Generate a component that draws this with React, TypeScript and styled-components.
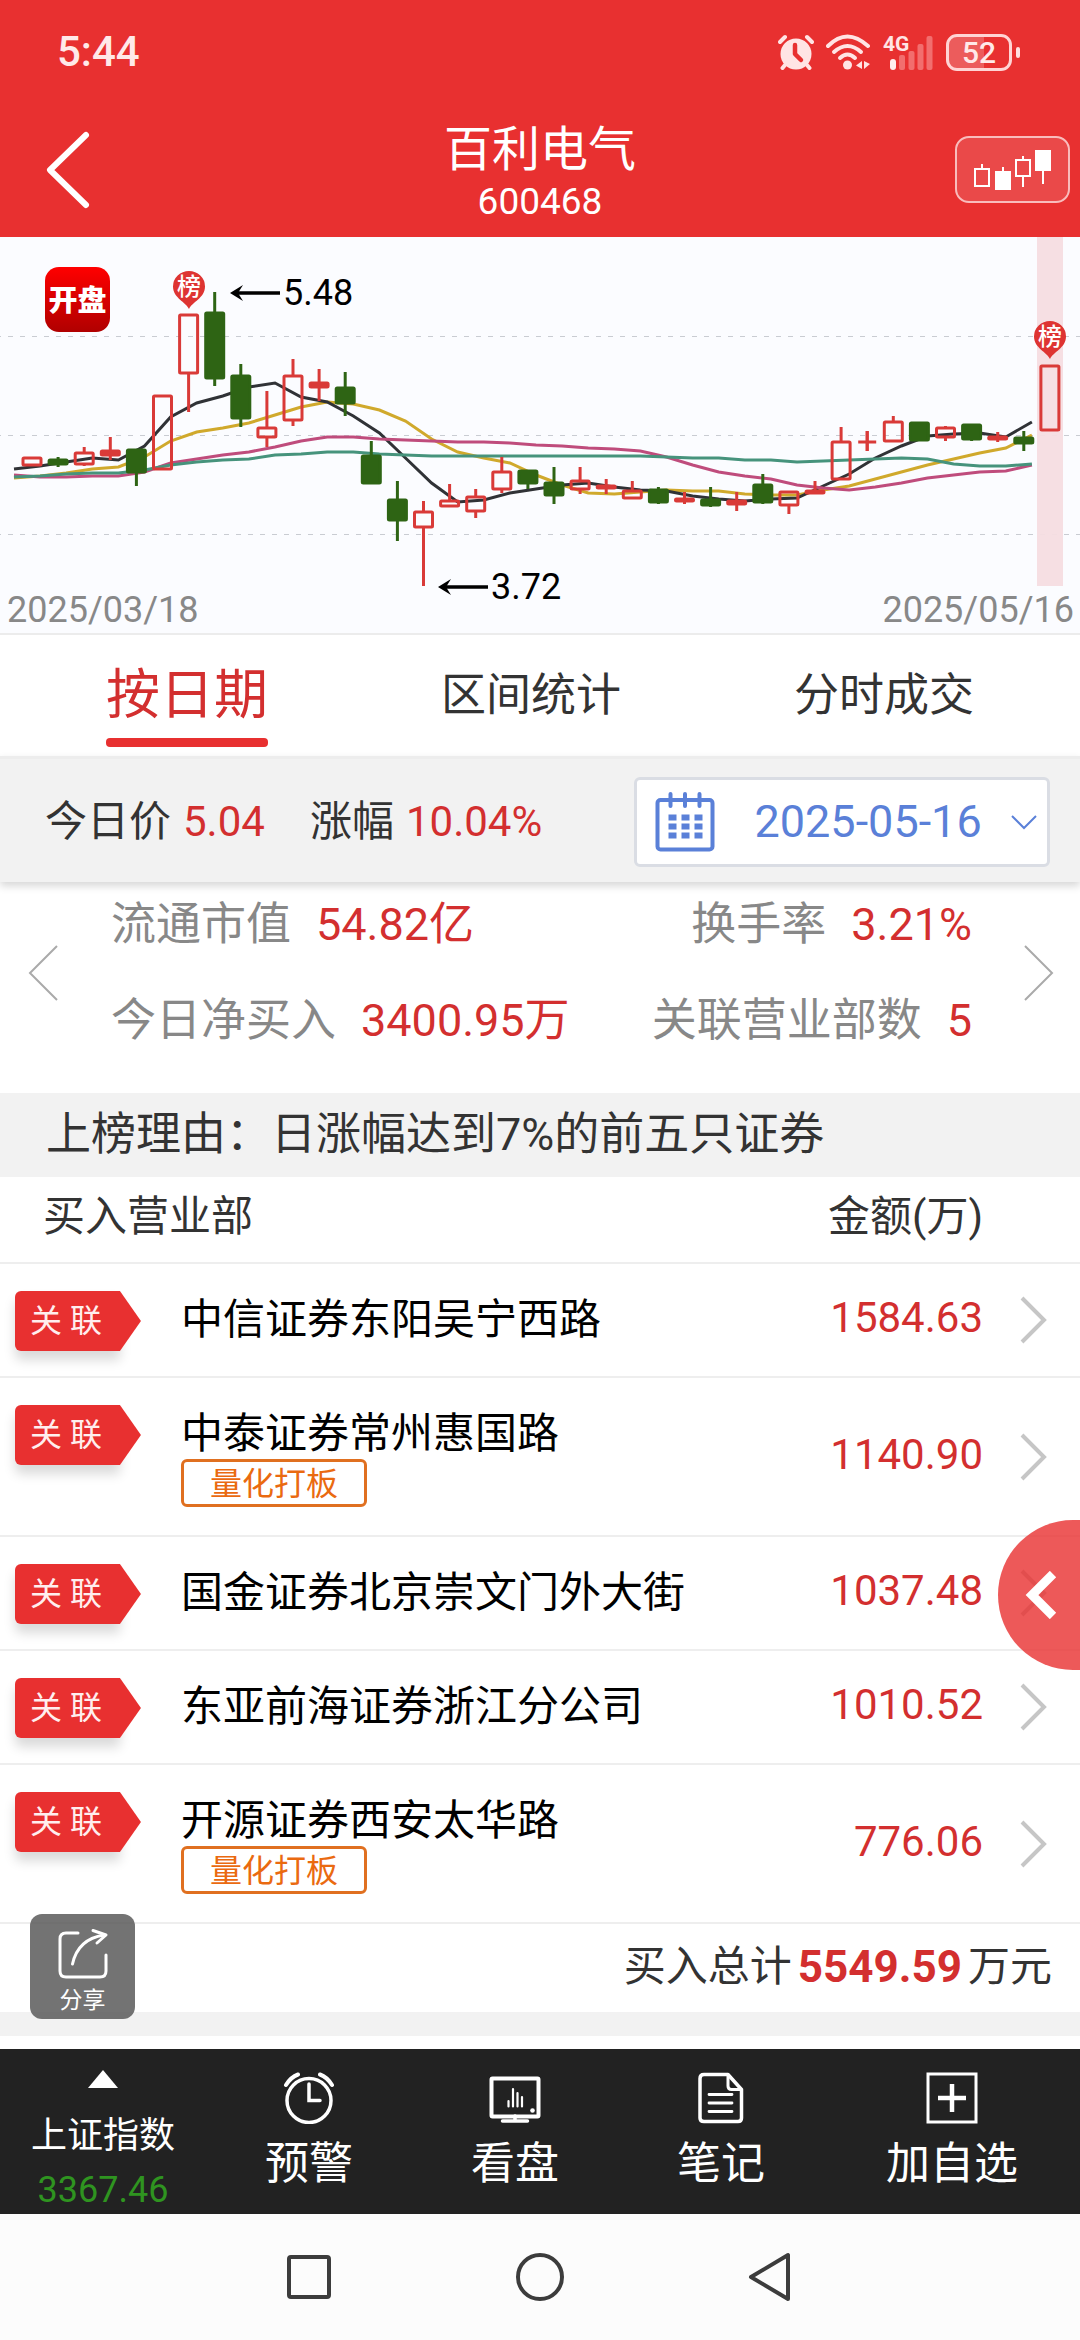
import React from 'react';
import styled, { createGlobalStyle } from 'styled-components';

const colors = {
  brand: '#e83030',
  rise: '#d32f2f',
  fall: '#2e6414',
  ink: '#333333',
  muted: '#888888',
  panel: '#f2f2f2',
  line: '#eeeeee',
  link: '#5a80d8',
  orange: '#e07020',
};

const GlobalStyle = createGlobalStyle`
  *, *::before, *::after { box-sizing: border-box; }
  body {
    margin: 0;
    background: #ffffff;
    color: ${colors.ink};
    font-family: Roboto, "Noto Sans CJK SC", sans-serif;
    font-size: 42px;
  }
  button, select {
    margin: 0;
    padding: 0;
    border: 0;
    background: none;
    color: inherit;
    font: inherit;
  }
  svg { display: block; flex: none; }
`;

const Page = styled.div`
  display: flex;
  flex-direction: column;
  min-height: 100vh;
`;

/* ---------- header ---------- */

const Header = styled.header`
  background: ${colors.brand};
  color: #ffffff;
`;

const StatusBar = styled.div`
  display: flex;
  align-items: center;
  justify-content: space-between;
  height: 102px;
  padding: 2px 60px 0 57px;
  color: #ffe9e9;
  line-height: 48px;
  font-weight: 500;
`;

const StatusIcons = styled.div`
  display: flex;
  align-items: center;
  gap: 12px;
`;

const BatteryGroup = styled.div`
  display: flex;
  align-items: center;
  gap: 4px;
  &::after {
    content: '';
    width: 4px;
    height: 11px;
    border-radius: 2px;
    background: #ffe0e0;
  }
`;

const Battery = styled.div`
  width: 66px;
  height: 37px;
  border: 3px solid #ffd4d4;
  border-radius: 11px;
  background: linear-gradient(90deg, #ec5c5c 58%, ${colors.brand} 58%);
  font-size: 30px;
  line-height: 32px;
  text-align: center;
`;

const TitleBar = styled.div`
  display: grid;
  grid-template-columns: 1fr auto 1fr;
  align-items: center;
  height: 135px;
  padding: 0 10px;
`;

const TitleBlock = styled.div`
  padding-top: 8px;
  text-align: center;
`;

const Title = styled.h1`
  margin: 0;
  font-size: 48px;
  font-weight: 400;
  line-height: 56px;
`;

const Code = styled.div`
  font-size: 37px;
  line-height: 48px;
`;

const IconButton = styled.button`
  display: block;
  justify-self: start;
  cursor: pointer;
`;

const BackButton = styled(IconButton)`
  margin-left: 34px;
`;

const ChartToggle = styled.button`
  display: grid;
  place-items: center;
  justify-self: end;
  width: 115px;
  height: 67px;
  border: 2px solid #f9bcbc;
  border-radius: 14px;
  background: rgba(255, 255, 255, 0.12);
`;

/* ---------- chart ---------- */

const ChartPanel = styled.section`
  border-bottom: 2px solid #ececec;
  background: #fbfcff;
  svg { width: 100%; height: auto; overflow: visible; }
`;

const ChartDates = styled.div`
  display: flex;
  justify-content: space-between;
  padding: 0 6px 0 7px;
  color: ${colors.muted};
  font-size: 36px;
  line-height: 46px;
`;

/* ---------- tabs ---------- */

const Tabs = styled.nav`
  display: flex;
  justify-content: space-between;
  height: 121px;
  padding: 0 106px;
`;

const Tab = styled.button<{ $active?: boolean }>`
  display: flex;
  flex-direction: column;
  align-items: center;
  justify-content: space-between;
  padding: 29px 0 9px;
  color: ${(p) => (p.$active ? colors.rise : colors.ink)};
  font-size: ${(p) => (p.$active ? 54 : 45)}px;
  line-height: 64px;
  &::after {
    content: '';
    align-self: stretch;
    height: 9px;
    border-radius: 4px;
    background: ${(p) => (p.$active ? colors.brand : 'transparent')};
  }
`;

/* ---------- quote bar ---------- */

const QuoteBar = styled.section`
  position: relative;
  display: flex;
  align-items: center;
  justify-content: space-between;
  height: 126px;
  padding: 2px 30px 0 45px;
  border-top: 3px solid #ededed;
  background: ${colors.panel};
  box-shadow: 0 4px 8px rgba(0, 0, 0, 0.16);
`;

const QuoteValues = styled.div`
  display: flex;
  gap: 45px;
  line-height: 56px;
`;

const Quote = styled.div`
  display: flex;
  gap: 12px;
`;

const Red = styled.span`
  color: ${colors.rise};
`;

const DateField = styled.label`
  display: flex;
  align-items: center;
  justify-content: space-between;
  width: 416px;
  height: 90px;
  padding: 0 9px 0 18px;
  border: 3px solid #dadde4;
  border-radius: 6px;
  background: #ffffff;
`;

const DateSelect = styled.select`
  appearance: none;
  padding-left: 12px;
  color: ${colors.link};
  font-size: 45px;
  line-height: 56px;
`;

/* ---------- stats ---------- */

const Stats = styled.section`
  display: flex;
  align-items: center;
  justify-content: space-between;
  padding: 11px 26px 40px 28px;
`;

const StatGrid = styled.dl`
  display: grid;
  flex: 1;
  grid-template-columns: auto auto;
  justify-content: space-between;
  row-gap: 32px;
  margin: 0;
  padding: 0 52px 0 53px;
  font-size: 45px;
  line-height: 64px;
`;

const Stat = styled.div<{ $end?: boolean }>`
  display: flex;
  justify-content: ${(p) => (p.$end ? 'flex-end' : 'flex-start')};
  gap: 25px;
  dt { color: ${colors.muted}; }
  dd { margin: 0; color: ${colors.rise}; }
`;

const Reason = styled.p`
  margin: 0;
  padding: 10px 46px;
  background: ${colors.panel};
  font-size: 45px;
  line-height: 64px;
`;

/* ---------- table ---------- */

const ListSection = styled.section`
  position: relative;
`;

const Table = styled.table`
  width: 100%;
  border-spacing: 0;
  table-layout: fixed;
`;

const HeadCell = styled.th<{ $end?: boolean }>`
  height: 87px;
  padding: 0 0 6px ${(p) => (p.$end ? 0 : 43)}px;
  border-bottom: 2px solid ${colors.line};
  font-weight: 400;
  line-height: 54px;
  text-align: ${(p) => (p.$end ? 'right' : 'left')};
`;

const Cell = styled.td`
  padding: 27px 0 25px;
  border-bottom: 2px solid ${colors.line};
  line-height: 54px;
  vertical-align: top;
`;

const TagCell = styled(Cell)`
  padding-left: 15px;
`;

const AmountCell = styled(Cell)`
  padding: 24px 0 28px;
  color: ${colors.rise};
  text-align: right;
  vertical-align: middle;
`;

const ArrowCell = styled(Cell)`
  padding: 26px 0 26px 37px;
  vertical-align: middle;
`;

const Tag = styled.span`
  display: flex;
  width: 105px;
  height: 60px;
  padding-left: 15px;
  border-radius: 6px 0 0 6px;
  background: ${colors.brand};
  box-shadow: 0 9px 12px rgba(0, 0, 0, 0.15);
  color: #ffeeee;
  font-size: 32px;
  line-height: 60px;
  white-space: nowrap;
  &::after {
    content: '';
    flex: none;
    width: 21px;
    height: 60px;
    margin-left: 18px;
    background: ${colors.brand};
    clip-path: polygon(0 0, 100% 50%, 0 100%);
  }
`;

const Branch = styled.div`
  padding-top: 4px;
  color: #000000;
  line-height: 50px;
  white-space: nowrap;
`;

const Label = styled.span`
  display: block;
  width: fit-content;
  height: 48px;
  margin-bottom: 3px;
  padding: 0 26px;
  border: 3px solid ${colors.orange};
  border-radius: 6px;
  color: #ea6a10;
  font-size: 32px;
  line-height: 44px;
`;

const Drawer = styled.button`
  position: absolute;
  top: 343px;
  right: 0;
  display: grid;
  place-items: center;
  width: 82px;
  height: 150px;
  padding-left: 6px;
  border-radius: 75px 0 0 75px;
  background: rgba(232, 48, 48, 0.8);
`;

const Total = styled.div`
  position: relative;
  display: flex;
  align-items: center;
  justify-content: flex-end;
  gap: 6px;
  height: 88px;
  padding: 0 28px 2px;
  line-height: 56px;
`;

const TotalValue = styled.strong`
  color: ${colors.rise};
  font-size: 44px;
  font-weight: 700;
`;

const Share = styled.button`
  position: absolute;
  left: 30px;
  bottom: -7px;
  display: flex;
  flex-direction: column;
  align-items: center;
  gap: 5px;
  width: 105px;
  height: 105px;
  padding-top: 14px;
  border-radius: 12px;
  background: rgba(80, 80, 80, 0.8);
  color: #ffffff;
  font-size: 23px;
  line-height: 32px;
`;

const Divider = styled.div`
  height: 24px;
  background: ${colors.panel};
`;

/* ---------- bottom bars ---------- */

const Toolbar = styled.nav`
  display: grid;
  grid-template-columns: repeat(4, 206fr) 256fr;
  height: 165px;
  margin-top: auto;
  background: #222222;
  color: #ffffff;
`;

const ToolButton = styled.button`
  display: flex;
  flex-direction: column;
  align-items: center;
  gap: 10px;
  padding-top: 23px;
  font-size: 44px;
  line-height: 60px;
`;

const IndexButton = styled(ToolButton)`
  gap: 0;
  padding-top: 21px;
  font-size: 36px;
  line-height: 54px;
  svg { margin-bottom: 21px; }
`;

const IndexValue = styled.span`
  color: #2f9420;
`;

const SystemNav = styled.nav`
  display: flex;
  justify-content: center;
  height: 126px;
  background: #fcfcfc;
`;

const SystemButton = styled.button`
  display: grid;
  place-items: center;
  width: 231px;
`;

/* ---------- chart data ---------- */

type Candle = { up: boolean; top: number; bottom: number; high: number; low: number };

const c = (up: 0 | 1, top: number, bottom: number, high = top, low = bottom): Candle => ({
  up: up === 1, top, bottom, high, low,
});

const candles: Candle[] = [
  c(1, 221, 228, 220, 229), c(0, 223, 227, 220, 230), c(1, 216, 227, 210, 229), c(1, 214, 218, 200, 223),
  c(0, 213, 235, 213, 249), c(1, 159, 232), c(1, 78, 136, 78, 175), c(0, 76, 141, 55, 149),
  c(0, 139, 181, 127, 190), c(1, 191, 200, 154, 210), c(1, 139, 183, 122, 189), c(1, 146, 150, 132, 164),
  c(0, 151, 166, 135, 179), c(0, 219, 246, 204, 246), c(0, 263, 283, 244, 304), c(1, 275, 290, 264, 349),
  c(1, 264, 269, 247, 269), c(1, 260, 274, 252, 281), c(1, 235, 252, 220, 256), c(0, 234, 246, 234, 252),
  c(0, 246, 258, 230, 267), c(1, 244, 252, 230, 257), c(1, 249, 251, 242, 257), c(1, 254, 261, 244, 261),
  c(0, 253, 265, 250, 267), c(1, 262, 264, 255, 267), c(0, 263, 268, 250, 270), c(1, 264, 267, 255, 274),
  c(0, 248, 265, 237, 267), c(1, 255, 268, 255, 277), c(1, 254, 256, 244, 256), c(1, 205, 242, 190, 242),
  c(1, 205, 205, 194, 214), c(1, 185, 204, 179, 205), c(0, 186, 203, 186, 204), c(1, 191, 200, 189, 204),
  c(0, 188, 202, 188, 204), c(1, 200, 202, 195, 205), c(0, 201, 206, 194, 214), c(1, 129, 193),
];

const averages = [
  {
    color: '#d0a92c',
    values: [241, 239, 236, 232, 230, 220, 204, 195, 191, 186, 178, 170, 165, 167, 173, 184, 202, 215, 221, 226, 238,
      248, 256, 257, 255, 253, 254, 254, 257, 258, 258, 253, 249, 242, 235, 228, 222, 216, 211, 198],
  },
  {
    color: '#303236',
    values: [232, 229, 225, 221, 223, 209, 180, 166, 159, 150, 146, 160, 165, 179, 196, 221, 246, 265, 263, 256, 252,
      248, 246, 250, 253, 254, 259, 262, 264, 262, 261, 249, 237, 221, 209, 199, 197, 196, 200, 185],
  },
  {
    color: '#bf4c7c',
    values: [238, 240, 240, 239, 239, 235, 226, 222, 218, 215, 210, 204, 200, 200, 202, 203, 204, 205, 205, 206, 208,
      209, 211, 212, 214, 220, 228, 235, 239, 242, 248, 251, 253, 250, 246, 241, 238, 235, 234, 228],
  },
  {
    color: '#46937c',
    values: [240, 239, 237, 236, 236, 233, 228, 225, 223, 222, 218, 217, 215, 215, 217, 218, 219, 219, 219, 219, 219,
      219, 219, 219, 219, 220, 221, 221, 223, 223, 225, 224, 223, 222, 221, 222, 227, 229, 229, 227],
  },
];

const STEP = 26.1;
const linePoints = (values: number[]) => values.map((v, i) => `${(14 + STEP * i).toFixed(1)},${v}`).join(' ');

function CandleMark({ candle, x }: { candle: Candle; x: number }) {
  const { up, top, bottom, high, low } = candle;
  const color = up ? '#d93a38' : colors.fall;
  const height = bottom - top;
  return (
    <g stroke={color} strokeWidth="3">
      <line x1={x} x2={x} y1={high} y2={up ? top : low} />
      {up && <line x1={x} x2={x} y1={bottom} y2={low} />}
      {height === 0 ? (
        <g>
          <line x1={x - 9} x2={x + 9} y1={top} y2={top} />
          <line x1={x} x2={x} y1={high} y2={low} />
        </g>
      ) : (
        <rect
          x={x - 9}
          y={top}
          width="18"
          height={height}
          rx="1"
          fill={up ? (height < 5 ? color : 'none') : color}
        />
      )}
    </g>
  );
}

function Pin({ x, y }: { x: number; y: number }) {
  return (
    <g>
      <path
        d={`M${x} ${y + 38} C${x - 3} ${y + 31} ${x - 16} ${y + 27} ${x - 16} ${y + 15.5} A16 15.5 0 0 1 ${x + 16} ${y + 15.5} C${x + 16} ${y + 27} ${x + 3} ${y + 31} ${x} ${y + 38}Z`}
        fill="#de3432"
      />
      <text x={x} y={y + 24} textAnchor="middle" fontSize="24" fontWeight="500" fill="#ffffff">榜</text>
    </g>
  );
}

function Callout({ x, y, label }: { x: number; y: number; label: string }) {
  return (
    <g>
      <path d={`M${x + 4} ${y}H${x + 50}`} stroke="#000" strokeWidth="3.4" />
      <path d={`M${x} ${y}L${x + 13} ${y - 8}L${x + 8} ${y}L${x + 13} ${y + 8}Z`} fill="#000" />
      <text x={x + 53} y={y + 12} fontSize="36" fill="#000">{label}</text>
    </g>
  );
}

function PriceChart() {
  return (
    <svg viewBox="0 0 1080 350" role="img" aria-label="K线图">
      <defs>
        <linearGradient id="logo" x1="0" y1="0" x2="0" y2="1">
          <stop offset="0" stopColor="#ff0000" />
          <stop offset="1" stopColor="#b00000" />
        </linearGradient>
      </defs>
      {[99, 198, 297].map((y) => (
        <line key={y} x1="-4" x2="1080" y1={y + 0.5} y2={y + 0.5} stroke="#c9ccd2" strokeWidth="1" strokeDasharray="5 7" />
      ))}
      <rect x="1037" y="0" width="26" height="349" fill="#f6dde2" fillOpacity="0.95" />
      {averages.map((line) => (
        <polyline key={line.color} points={linePoints(line.values)} fill="none" stroke={line.color} strokeWidth="3" />
      ))}
      {candles.map((candle, i) => (
        <CandleMark key={i} candle={candle} x={32 + STEP * i} />
      ))}
      <rect x="45" y="30" width="65" height="65" rx="14" fill="url(#logo)" />
      <text x="77.5" y="74" textAnchor="middle" fontSize="29" fontWeight="900" fill="#ffffff">开盘</text>
      <Pin x={189} y={34} />
      <Pin x={1050} y={84} />
      <Callout x={230} y={56} label="5.48" />
      <Callout x={438} y={350} label="3.72" />
    </svg>
  );
}

/* ---------- icons ---------- */

const AlarmStatus = () => (
  <svg width="36" height="36" viewBox="0 0 36 36">
    <g stroke="#ffe4e4" strokeLinecap="round" fill="none">
      <path d="M2 8L7 3M34 8L29 3" strokeWidth="4" />
      <path d="M7 31L4.5 34M29 31L31.5 34" strokeWidth="4" />
    </g>
    <circle cx="18" cy="20" r="15.5" fill="#ffe4e4" />
    <path d="M17 11V20L23 26" fill="none" stroke={colors.brand} strokeWidth="4.5" strokeLinecap="round" strokeLinejoin="round" />
  </svg>
);

const WifiStatus = () => (
  <svg width="44" height="36" viewBox="0 0 44 36">
    <g fill="none" stroke="#ffe4e4" strokeWidth="4" strokeLinecap="round">
      <path d="M2 12Q21 -7 42 12" />
      <path d="M8 18Q21.5 6 35 18" />
      <path d="M14 24Q21.5 17 29 24" />
    </g>
    <circle cx="21.5" cy="31" r="4.5" fill="#ffe4e4" />
    <path d="M36 27V35L30 31.500ZM38 27L44 30L38 35Z" fill="#ffe4e4" />
  </svg>
);

const SignalStatus = () => (
  <svg width="52" height="44" viewBox="-1 -4 52 44">
    <text x="0" y="17" fontSize="21" fontWeight="700" fill="#ffe4e4">4G</text>
    <rect x="7" y="25" width="6" height="11" rx="3" fill="#fff0f0" />
    {[[16, 21], [25.5, 17], [34.5, 10], [43.5, 2]].map(([x, y]) => (
      <rect key={x} x={x} y={y} width="6" height={36 - y} rx="2" fill="#f26e6e" />
    ))}
  </svg>
);

const CandlesIcon = () => (
  <svg width="80" height="42" viewBox="0 0 80 42">
    <g fill="none" stroke="#ffffff" strokeWidth="2">
      <rect x="2" y="20" width="14" height="17" />
      <path d="M9 15V20M30 18V23M50 7V10M50 28V38M70 20V35" />
      <rect x="43" y="11" width="14" height="16" />
    </g>
    <rect x="22" y="22" width="16" height="19" fill="#fff" />
    <rect x="62" y="1" width="16" height="21" fill="#fff" />
  </svg>
);

const CalendarIcon = () => (
  <svg width="60" height="60" viewBox="0 0 60 60">
    <rect x="2.5" y="8" width="55" height="49.5" rx="3" fill="none" stroke={colors.link} strokeWidth="4" />
    <path d="M15.5 2V14M30 2V14M44.5 2V14" stroke={colors.link} strokeWidth="4" strokeLinecap="round" />
    {[0, 1, 2].map((row) => [0, 1, 2].map((col) => (
      <rect key={`${row}${col}`} x={13.5 + col * 13} y={22.5 + row * 9} width="8" height="6" fill={colors.link} />
    )))}
  </svg>
);

type ChevronProps = { points: string; width: number; height: number; color: string; stroke: number; round?: boolean };

const Chevron = ({ points, width, height, color, stroke, round }: ChevronProps) => (
  <svg width={width} height={height} viewBox={`0 0 ${width} ${height}`}>
    <polyline
      points={points}
      fill="none"
      stroke={color}
      strokeWidth={stroke}
      strokeLinecap={round ? 'round' : 'butt'}
      strokeLinejoin={round ? 'round' : 'miter'}
    />
  </svg>
);

const ShareIcon = () => (
  <svg width="52" height="52" viewBox="0 0 52 52" fill="none" stroke="#ffffff" strokeWidth="3" strokeLinecap="round" strokeLinejoin="round">
    <path d="M21 5H9Q3 5 3 11V43Q3 49 9 49H43Q49 49 49 43V27" />
    <path d="M15.5 36Q21 11 47 7" />
    <path d="M36 2.5L49 7L40 15" />
  </svg>
);

const AlarmIcon = () => (
  <svg width="52" height="52" viewBox="0 0 52 52" fill="none" stroke="#ffffff" strokeWidth="3.5" strokeLinecap="round">
    <circle cx="26" cy="28.5" r="22" />
    <path d="M26 12V28.5H37" />
    <path d="M3 13Q8 5 15 2.500M49 13Q44 5 37 2.500" strokeWidth="4" />
  </svg>
);

const MonitorIcon = () => (
  <svg width="52" height="52" viewBox="0 0 52 52" fill="none" stroke="#ffffff" strokeLinecap="round">
    <rect x="2.5" y="6.5" width="47" height="38" rx="1" strokeWidth="4" />
    <path d="M26 44V48M13.5 49H38.5" strokeWidth="3.5" />
    <path d="M19.5 29V34.500M24 17V34.500M28.5 21V34.500M33 25V34.500" strokeWidth="2.2" />
    <circle cx="43.5" cy="38.5" r="2.3" fill="#ffffff" stroke="none" />
  </svg>
);

const NoteIcon = () => (
  <svg width="52" height="52" viewBox="0 0 52 52" fill="none" stroke="#ffffff" strokeWidth="3.5" strokeLinejoin="round" strokeLinecap="round">
    <path d="M9 2.5H33L46.5 17.5V46Q46.5 49.5 43 49.5H9Q5 49.5 5 46V6.5Q5 2.5 9 2.5Z" />
    <path d="M33 3V14Q33 17.5 36.5 17.5H46" strokeWidth="3" />
    <path d="M14 22.5H37M14 31H37M14 39.5H37" strokeWidth="2.8" />
  </svg>
);

const AddIcon = () => (
  <svg width="52" height="52" viewBox="0 0 52 52" fill="none" stroke="#ffffff">
    <rect x="2" y="2" width="48" height="48" strokeWidth="3" />
    <path d="M26 12V40M12 26H40" strokeWidth="4.5" />
  </svg>
);

/* ---------- data ---------- */

const branches = [
  { name: '中信证券东阳吴宁西路', amount: '1584.63' },
  { name: '中泰证券常州惠国路', amount: '1140.90', label: '量化打板' },
  { name: '国金证券北京崇文门外大街', amount: '1037.48' },
  { name: '东亚前海证券浙江分公司', amount: '1010.52' },
  { name: '开源证券西安太华路', amount: '776.06', label: '量化打板' },
];

const tools = [
  { text: '预警', Icon: AlarmIcon },
  { text: '看盘', Icon: MonitorIcon },
  { text: '笔记', Icon: NoteIcon },
  { text: '加自选', Icon: AddIcon },
];

const TagCol = styled.col`
  width: 181px;
`;

const AmountCol = styled.col`
  width: 190px;
`;

const ArrowCol = styled.col`
  width: 97px;
`;

export default function App() {
  return (
    <Page>
      <GlobalStyle />
      <Header>
        <StatusBar>
          <span>5:44</span>
          <StatusIcons>
            <AlarmStatus />
            <WifiStatus />
            <SignalStatus />
            <BatteryGroup><Battery>52</Battery></BatteryGroup>
          </StatusIcons>
        </StatusBar>
        <TitleBar>
          <BackButton aria-label="返回">
            <Chevron points="42,5 6,40 42,75" width={48} height={80} color="#ffffff" stroke={6} round />
          </BackButton>
          <TitleBlock>
            <Title>百利电气</Title>
            <Code>600468</Code>
          </TitleBlock>
          <ChartToggle aria-label="K线"><CandlesIcon /></ChartToggle>
        </TitleBar>
      </Header>

      <ChartPanel>
        <PriceChart />
        <ChartDates>
          <span>2025/03/18</span>
          <span>2025/05/16</span>
        </ChartDates>
      </ChartPanel>

      <Tabs>
        <Tab $active>按日期</Tab>
        <Tab>区间统计</Tab>
        <Tab>分时成交</Tab>
      </Tabs>

      <QuoteBar>
        <QuoteValues>
          <Quote>今日价<Red>5.04</Red></Quote>
          <Quote>涨幅<Red>10.04%</Red></Quote>
        </QuoteValues>
        <DateField>
          <CalendarIcon />
          <DateSelect aria-label="日期" defaultValue="2025-05-16">
            <option>2025-05-16</option>
          </DateSelect>
          <Chevron points="2,2 14,14 26,2" width={28} height={16} color={colors.link} stroke={2} />
        </DateField>
      </QuoteBar>

      <Stats>
        <IconButton aria-label="上一日">
          <Chevron points="29,2 2,29 29,56" width={30} height={58} color="#aaaaaa" stroke={2} />
        </IconButton>
        <StatGrid>
          <Stat><dt>流通市值</dt><dd>54.82亿</dd></Stat>
          <Stat $end><dt>换手率</dt><dd>3.21%</dd></Stat>
          <Stat><dt>今日净买入</dt><dd>3400.95万</dd></Stat>
          <Stat $end><dt>关联营业部数</dt><dd>5</dd></Stat>
        </StatGrid>
        <IconButton aria-label="下一日">
          <Chevron points="1,2 28,29 1,56" width={30} height={58} color="#aaaaaa" stroke={2} />
        </IconButton>
      </Stats>

      <Reason>上榜理由：日涨幅达到7%的前五只证券</Reason>

      <ListSection>
        <Table>
          <colgroup>
            <TagCol />
            <col />
            <AmountCol />
            <ArrowCol />
          </colgroup>
          <thead>
            <tr>
              <HeadCell colSpan={2}>买入营业部</HeadCell>
              <HeadCell $end>金额(万)</HeadCell>
              <HeadCell />
            </tr>
          </thead>
          <tbody>
            {branches.map((branch) => (
              <tr key={branch.name}>
                <TagCell><Tag>关 联</Tag></TagCell>
                <Cell>
                  <Branch>{branch.name}</Branch>
                  {branch.label && <Label>{branch.label}</Label>}
                </Cell>
                <AmountCell>{branch.amount}</AmountCell>
                <ArrowCell>
                  <Chevron points="2,2 24,24 2,46" width={28} height={48} color="#c6c6c6" stroke={4} />
                </ArrowCell>
              </tr>
            ))}
          </tbody>
        </Table>
        <Drawer aria-label="展开">
          <Chevron points="29,3 8,24 29,45" width={36} height={48} color="#ffffff" stroke={9} />
        </Drawer>
      </ListSection>

      <Total>
        <Share><ShareIcon />分享</Share>
        <span>买入总计</span>
        <TotalValue>5549.59</TotalValue>
        <span>万元</span>
      </Total>
      <Divider />

      <Toolbar>
        <IndexButton>
          <svg width="30" height="18" viewBox="0 0 30 18"><path d="M15 0L30 18H0Z" fill="#ffffff" /></svg>
          <span>上证指数</span>
          <IndexValue>3367.46</IndexValue>
        </IndexButton>
        {tools.map(({ text, Icon }) => (
          <ToolButton key={text}><Icon />{text}</ToolButton>
        ))}
      </Toolbar>

      <SystemNav>
        <SystemButton aria-label="最近任务">
          <svg width="50" height="50" viewBox="0 0 50 50"><rect x="5" y="5" width="40" height="40" rx="2" fill="none" stroke="#3c3c3c" strokeWidth="4" /></svg>
        </SystemButton>
        <SystemButton aria-label="主页">
          <svg width="50" height="50" viewBox="0 0 50 50"><circle cx="25" cy="25" r="22" fill="none" stroke="#3c3c3c" strokeWidth="4" /></svg>
        </SystemButton>
        <SystemButton aria-label="后退">
          <svg width="50" height="50" viewBox="0 0 50 50"><path d="M42 3V47L5 25Z" fill="none" stroke="#3c3c3c" strokeWidth="4" strokeLinejoin="round" /></svg>
        </SystemButton>
      </SystemNav>
    </Page>
  );
}
